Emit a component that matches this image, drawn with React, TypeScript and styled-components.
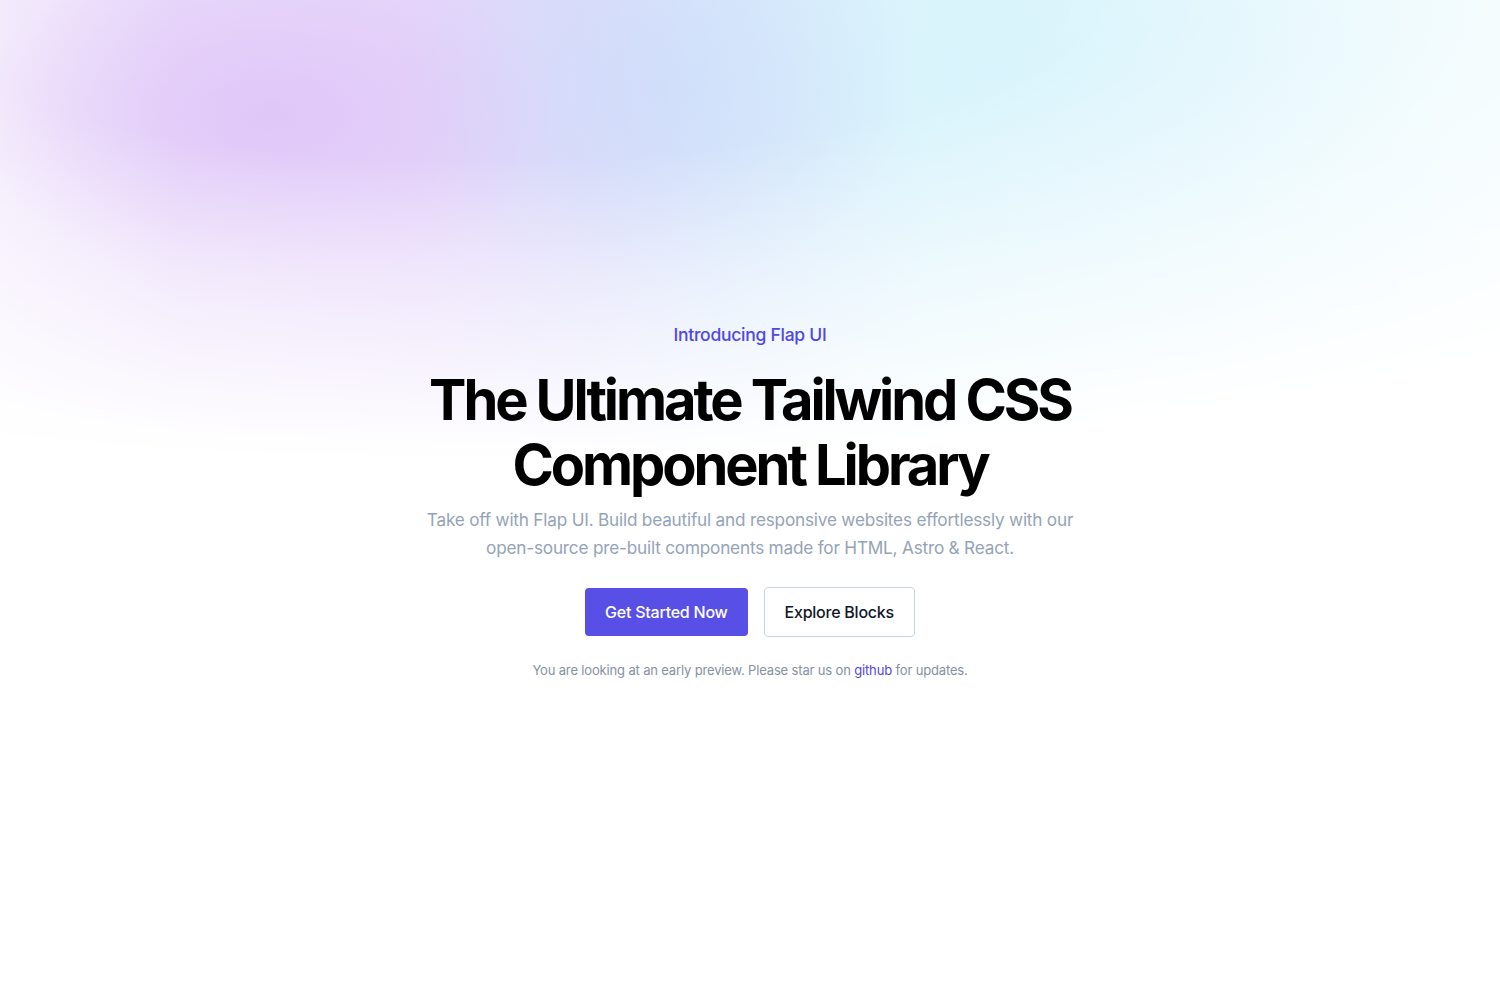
import React from "react";
import styled, { createGlobalStyle } from "styled-components";

const Global = createGlobalStyle`
  html, body { margin: 0; padding: 0; background: #ffffff; }
  body { font-family: Inter, "Noto Sans", sans-serif; -webkit-font-smoothing: antialiased; }
`;

const Page = styled.main`
  position: relative;
  min-height: 1000px;
  overflow: hidden;
  background: #ffffff;
`;

const Glow = styled.div`
  position: absolute;
  top: 0;
  left: 0;
  right: 0;
  height: 620px;
  pointer-events: none;
  background:
    radial-gradient(ellipse 300px 170px at 270px 115px, rgba(221, 193, 248, 0.75), rgba(221, 193, 248, 0) 100%),
    radial-gradient(ellipse 260px 200px at 650px 90px, rgba(205, 220, 250, 0.7), rgba(205, 220, 250, 0) 100%),
    radial-gradient(ellipse 420px 200px at 1000px 70px, rgba(215, 244, 252, 0.6), rgba(215, 244, 252, 0) 100%),
    linear-gradient(90deg, #f3eafc 0%, #e9d9fa 12%, #e6d6fa 28%, #dcdcfa 40%, #d8e6fb 48%, #dcf4fc 62%, #e1f6fd 80%, #ecfafe 100%);
  -webkit-mask-image: radial-gradient(ellipse 1650px 460px at 480px 0px, #000 35%, rgba(0, 0, 0, 0.5) 65%, transparent 100%);
  mask-image: radial-gradient(ellipse 1650px 460px at 480px 0px, #000 35%, rgba(0, 0, 0, 0.5) 65%, transparent 100%);
`;

const Hero = styled.section`
  position: relative;
  display: flex;
  flex-direction: column;
  align-items: center;
  text-align: center;
  padding-top: 321px;
`;

const Eyebrow = styled.p`
  margin: 0;
  font-size: 17.5px;
  line-height: 28px;
  font-weight: 500;
  letter-spacing: -0.015em;
  color: #4f46e5;
`;

const Title = styled.h1`
  margin: 19px 0 0;
  font-size: 56px;
  line-height: 65px;
  font-weight: 700;
  letter-spacing: -0.055em;
  color: #000000;
`;

const Lead = styled.p`
  margin: 8px 0 0;
  max-width: 670px;
  font-size: 17.2px;
  line-height: 28px;
  letter-spacing: -0.012em;
  color: #94a3b8;
`;

const Actions = styled.div`
  display: flex;
  gap: 16px;
  margin-top: 25px;
  align-items: center;
`;

const Button = styled.a<{ $primary?: boolean }>`
  display: inline-flex;
  align-items: center;
  justify-content: center;
  box-sizing: border-box;
  height: ${(p) => (p.$primary ? "48px" : "50px")};
  padding: 0 20px;
  border-radius: 4px;
  font-size: 16px;
  font-weight: 500;
  letter-spacing: -0.015em;
  text-decoration: none;
  background: ${(p) => (p.$primary ? "#574fe6" : "#ffffff")};
  color: ${(p) => (p.$primary ? "#ffffff" : "#0f172a")};
  border: ${(p) => (p.$primary ? "none" : "1px solid #cbd5e1")};
`;

const Note = styled.p`
  margin: 23px 0 0;
  font-size: 13px;
  line-height: 20px;
  letter-spacing: -0.012em;
  color: #8591a4;
`;

const Link = styled.a`
  color: #4f46e5;
  text-decoration: none;
`;

export default function App() {
  return (
    <Page>
      <Global />
      <Glow />
      <Hero>
        <Eyebrow>Introducing Flap UI</Eyebrow>
        <Title>
          The Ultimate Tailwind CSS
          <br />
          Component Library
        </Title>
        <Lead>
          Take off with Flap UI. Build beautiful and responsive websites effortlessly with our open-source
          pre-built components made for HTML, Astro &amp; React.
        </Lead>
        <Actions>
          <Button $primary href="#">Get Started Now</Button>
          <Button href="#">Explore Blocks</Button>
        </Actions>
        <Note>
          You are looking at an early preview. Please star us on <Link href="#">github</Link> for updates.
        </Note>
      </Hero>
    </Page>
  );
}
